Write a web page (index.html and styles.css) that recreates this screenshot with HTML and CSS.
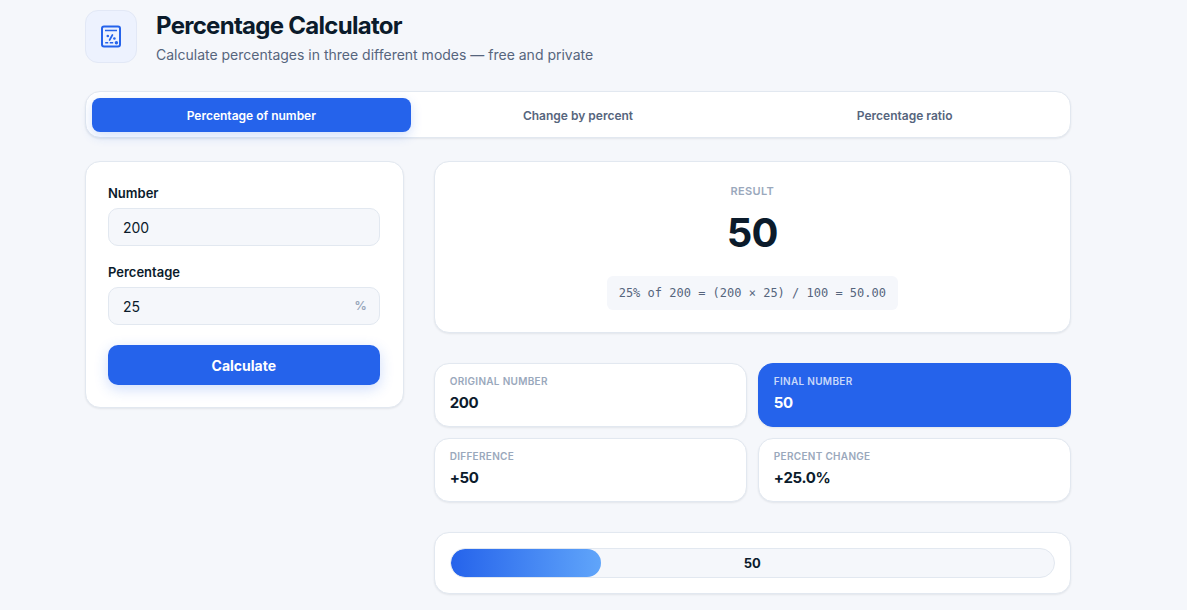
FILE: index.html
```html
<!DOCTYPE html>
<html lang="en">
<head>
<meta charset="UTF-8">
<meta name="viewport" content="width=device-width, initial-scale=1">
<title>Percentage Calculator</title>
<link rel="stylesheet" href="styles.css">
</head>
<body>

	<div class="container">

		<header class="header">
			<div class="header-icon">
				<svg width="24" height="24" viewBox="0 0 24 24" fill="none" stroke="currentColor" stroke-linecap="round">
					<rect x="3" y="1.5" width="18" height="20" rx="2" stroke-width="2"/>
					<path d="M6 5.5h12" stroke-width="1.5" stroke-linecap="butt"/>
					<path d="M13.4 10l-2.8 5" stroke-width="1.7"/>
					<path d="M6.2 17.8h3M10.8 17.8h3.4" stroke-width="1.5" stroke-linecap="butt"/>
					<circle cx="8.8" cy="11" r="1.3" fill="currentColor" stroke="none"/>
					<circle cx="15.4" cy="13.5" r="1.3" fill="currentColor" stroke="none"/>
					<circle cx="17.4" cy="17.7" r="1.7" fill="currentColor" stroke="none"/>
				</svg>
			</div>
			<div>
				<h1>Percentage Calculator</h1>
				<p>Calculate percentages in three different modes — free and private</p>
			</div>
		</header>

		<nav class="tabs card">
			<button type="button" class="tab active">Percentage of number</button>
			<button type="button" class="tab">Change by percent</button>
			<button type="button" class="tab">Percentage ratio</button>
		</nav>

		<main class="layout">

			<form class="form card">
				<div class="field">
					<label for="number">Number</label>
					<input type="text" id="number" inputmode="decimal" value="200">
				</div>
				<div class="field">
					<label for="percent">Percentage</label>
					<div class="input-wrap">
						<input type="text" id="percent" inputmode="decimal" value="25">
						<span class="suffix">%</span>
					</div>
				</div>
				<button type="button" class="btn">Calculate</button>
			</form>

			<div class="results">
				<section class="result card">
					<div class="result-label">Result</div>
					<div class="result-value">50</div>
					<div class="formula">25% of 200 = (200 × 25) / 100 = 50.00</div>
				</section>

				<section class="stats">
					<div class="stat card">
						<div class="stat-label">Original number</div>
						<div class="stat-value">200</div>
					</div>
					<div class="stat card primary">
						<div class="stat-label">Final number</div>
						<div class="stat-value">50</div>
					</div>
					<div class="stat card">
						<div class="stat-label">Difference</div>
						<div class="stat-value">+50</div>
					</div>
					<div class="stat card">
						<div class="stat-label">Percent change</div>
						<div class="stat-value">+25.0%</div>
					</div>
				</section>

				<section class="progress card">
					<div class="bar">
						<div class="bar-fill" style="width: 25%"></div>
						<span class="bar-text">50</span>
					</div>
				</section>
			</div>

		</main>
	</div>

</body>
</html>
```
FILE: styles.css
```css
* {
	box-sizing: border-box;
}

body {
	margin: 0;
	padding: 10px 116px 16px 85px;
	background: #f5f7fb;
	color: #0b1b2b;
	font-family: Inter, "Liberation Sans", sans-serif;
}

button, input {
	font-family: inherit;
}

.card {
	background: #fff;
	border: 1px solid #e2e8f0;
	border-radius: 15px;
	box-shadow: 0 1px 2px rgba(15, 23, 42, 0.08);
}

/* header */
.header {
	display: flex;
	gap: 19px;
	margin-bottom: 25px;
}

.header-icon {
	display: flex;
	align-items: center;
	justify-content: center;
	width: 52px;
	height: 53px;
	background: #edf2fe;
	border: 1px solid #e2e8f6;
	border-radius: 13px;
	color: #2563eb;
}

h1 {
	margin: 0;
	font-size: 24px;
	line-height: 32px;
	font-weight: 700;
	letter-spacing: -0.03em;
}

.header p {
	margin: 2px 0 0;
	font-size: 14px;
	line-height: 22px;
	color: #56657d;
}

/* tabs */
.tabs {
	display: grid;
	grid-template-columns: repeat(3, 1fr);
	gap: 8px;
	padding: 6px 6px 5px;
	margin-bottom: 23px;
}

.tab {
	height: 34px;
	padding: 0 12px;
	border: none;
	border-radius: 8px;
	background: none;
	color: #56657d;
	font-size: 12px;
	font-weight: 600;
	cursor: pointer;
}

.tab.active {
	background: #2563eb;
	color: #fff;
	box-shadow: 0 4px 12px rgba(37, 99, 235, 0.2);
}

/* layout */
.layout {
	display: grid;
	grid-template-columns: 1fr 2fr;
	gap: 30px;
	align-items: start;
}

.form {
	padding: 21px 23px 22px 22px;
}

.field {
	margin-bottom: 16px;
}

.field label {
	display: block;
	margin-bottom: 5px;
	font-size: 13px;
	line-height: 20px;
	font-weight: 600;
}

.field input {
	display: block;
	width: 100%;
	height: 38px;
	padding: 0 14px;
	background: #f5f7fb;
	border: 1px solid #e2e8f0;
	border-radius: 10px;
	color: #0b1b2b;
	font-size: 14px;
}

.input-wrap {
	position: relative;
}

.suffix {
	position: absolute;
	top: 0;
	right: 13px;
	line-height: 38px;
	font-size: 12px;
	font-weight: 700;
	color: #9aa8bc;
}

.btn {
	width: 100%;
	height: 40px;
	margin-top: 4px;
	border: none;
	border-radius: 10px;
	background: #2563eb;
	color: #fff;
	font-size: 14px;
	font-weight: 700;
	box-shadow: 0 4px 14px rgba(37, 99, 235, 0.22);
	cursor: pointer;
}

/* results */
.results {
	display: grid;
	gap: 30px;
}

.result {
	padding: 21px 22px 22px;
	text-align: center;
}

.result-label {
	font-size: 11px;
	line-height: 16px;
	font-weight: 600;
	letter-spacing: 0.03em;
	text-transform: uppercase;
	color: #9aa8bc;
}

.result-value {
	margin: 9px 0 18px;
	font-size: 40px;
	line-height: 50px;
	font-weight: 700;
	letter-spacing: -0.02em;
}

.formula {
	display: inline-block;
	padding: 8px 12px;
	background: #f5f7fb;
	border-radius: 6px;
	font-family: Consolas, "DejaVu Sans Mono", monospace;
	font-size: 12px;
	line-height: 18px;
	color: #56657d;
	vertical-align: top;
}

.stats {
	display: grid;
	grid-template-columns: 1fr 1fr;
	gap: 11px;
}

.stat {
	padding: 10px 15px 11px;
}

.stat-label {
	font-size: 10px;
	line-height: 15px;
	font-weight: 600;
	letter-spacing: 0.03em;
	text-transform: uppercase;
	color: #9aa8bc;
}

.stat-value {
	margin-top: 2px;
	font-size: 15px;
	line-height: 24px;
	font-weight: 700;
	letter-spacing: -0.02em;
}

.stat.primary {
	background: #2563eb;
	border-color: #2563eb;
	color: #fff;
}

.primary .stat-label {
	color: #c8d8fa;
}

/* progress */
.progress {
	padding: 15px;
}

.bar {
	position: relative;
	height: 30px;
	background: #f5f7fb;
	border: 1px solid #e2e8f0;
	border-radius: 15px;
	overflow: hidden;
}

.bar-fill {
	height: 100%;
	border-radius: 15px;
	background: linear-gradient(90deg, #2563eb, #60a5fa);
}

.bar-text {
	position: absolute;
	inset: 0;
	line-height: 28px;
	text-align: center;
	font-size: 13px;
	font-weight: 700;
}
```
